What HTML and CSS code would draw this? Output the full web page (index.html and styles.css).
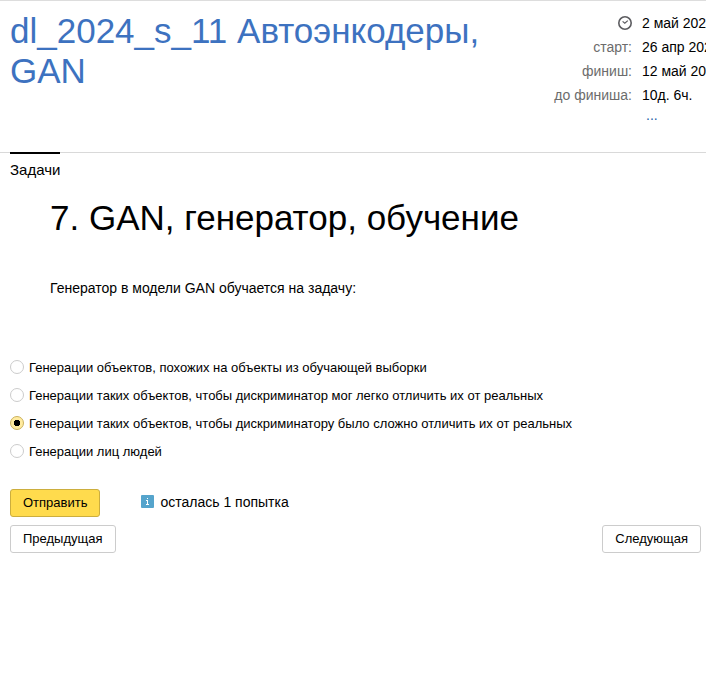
FILE: index.html
```html
<!DOCTYPE html>
<html lang="ru">
<head>
<meta charset="utf-8">
<meta name="viewport" content="width=device-width, initial-scale=1">
<title>dl_2024_s_11 Автоэнкодеры, GAN</title>
<link rel="stylesheet" href="styles.css">
</head>
<body>
<header class="header">
  <h1 class="title"><a href="#">dl_2024_s_11 Автоэнкодеры, GAN</a></h1>
  <dl class="times">
    <dt><svg class="clock" viewBox="0 0 14 14" width="14" height="14" role="img" aria-label="Сейчас"><circle cx="7" cy="7" r="6.2" fill="none" stroke="#5c5c60" stroke-width="1.6"/><path d="M4.6 5.4 6.8 7.3 9.8 4.6" fill="none" stroke="#5c5c60" stroke-width="1.2"/></svg></dt>
    <dd>2 май 2024</dd>
    <dt>старт:</dt><dd>26 апр 2024</dd>
    <dt>финиш:</dt><dd>12 май 2024</dd>
    <dt>до финиша:</dt><dd>10д. 6ч.</dd>
    <dd class="more"><a href="#">...</a></dd>
  </dl>
</header>
<nav class="tabs"><a class="tab" href="#">Задачи</a></nav>
<main>
  <section class="problem">
    <h2>7. GAN, генератор, обучение</h2>
    <p>Генератор в модели GAN обучается на задачу:</p>
  </section>
  <form class="form">
    <div class="options">
      <label class="option"><input type="radio" name="answer">Генерации объектов, похожих на объекты из обучающей выборки</label>
      <label class="option"><input type="radio" name="answer">Генерации таких объектов, чтобы дискриминатор мог легко отличить их от реальных</label>
      <label class="option"><input type="radio" name="answer" checked>Генерации таких объектов, чтобы дискриминатору было сложно отличить их от реальных</label>
      <label class="option"><input type="radio" name="answer">Генерации лиц людей</label>
    </div>
    <div class="submit">
      <button class="button primary" type="submit">Отправить</button>
      <span class="attempts"><svg class="info" width="13" height="13" viewBox="0 0 13 13" aria-hidden="true"><rect width="13" height="13" rx="1" fill="#55a4cc"/><path d="M6 3h1v1H6zM5 5h2v4h1v1H5V9h1V6H5z" fill="#fff"/></svg>осталась 1 попытка</span>
    </div>
    <div class="pager">
      <button class="button" type="button">Предыдущая</button>
      <button class="button" type="button">Следующая</button>
    </div>
  </form>
</main>
</body>
</html>
```

FILE: styles.css
```css
* { box-sizing: border-box; }
body {
  margin: 0;
  border-top: 1px solid #ddd;
  overflow-x: hidden;
  background: #fff;
  color: #000;
  font: 14px/24px "Liberation Sans", Arial, sans-serif;
}
a { color: inherit; text-decoration: none; }
.header {
  display: flex;
  justify-content: space-between;
  min-height: 151px;
  padding: 10px 0 0 10px;
  overflow: hidden;
}
.title {
  flex: 0 1 500px;
  margin: 0;
  color: #3d72c0;
  font-size: 35px;
  font-weight: 400;
  line-height: 40px;
}
.times {
  display: grid;
  grid-template-columns: 80px 64px;
  column-gap: 10px;
  align-content: start;
  margin: 0;
  white-space: nowrap;
}
.times dt { color: #6c6c6c; text-align: right; }
.times dd { margin: 0; }
.times .more { grid-column: 2; padding-left: 4px; line-height: 16px; color: #1f5fa8; }
.clock { display: block; margin: 5px 0 0 auto; }
.tabs {
  display: flex;
  padding-left: 10px;
  border-top: 1px solid #d9d9d9;
}
.tab {
  margin-top: -1px;
  padding-top: 4px;
  border-top: 2px solid #000;
  font-size: 15px;
}
.problem { padding: 16px 50px 0; }
.problem h2 {
  margin: 0;
  font-size: 35px;
  font-weight: 400;
  line-height: 40px;
}
.problem p { margin: 38px 0 0; }
.form { padding: 54px 5px 0 10px; font-size: 13px; }
.options { display: grid; }
.option {
  display: flex;
  align-items: center;
  gap: 5px;
  height: 28px;
}
.option input {
  appearance: none;
  width: 14px;
  height: 14px;
  margin: 0 0 2px;
  border: 1px solid #ccc;
  border-radius: 50%;
  background: #fff;
}
.option input:checked {
  border-color: #ccb15a;
  background: radial-gradient(circle, #000 0 3px, #ffeba0 3px);
}
.submit {
  display: flex;
  align-items: center;
  gap: 41px;
  margin: 23px 0 8px;
}
.attempts {
  display: flex;
  align-items: center;
  gap: 6px;
  margin-bottom: 2px;
  font-size: 14px;
}
.info { margin-bottom: 2px; }
.pager { display: flex; justify-content: space-between; }
.button {
  height: 28px;
  padding: 0 12px;
  border: 1px solid #ccc;
  border-radius: 3px;
  background: #fff;
  color: #000;
  font: 13px/26px "Liberation Sans", Arial, sans-serif;
}
.primary { border-color: #ccae3e; background: #ffdb4d; }
```
